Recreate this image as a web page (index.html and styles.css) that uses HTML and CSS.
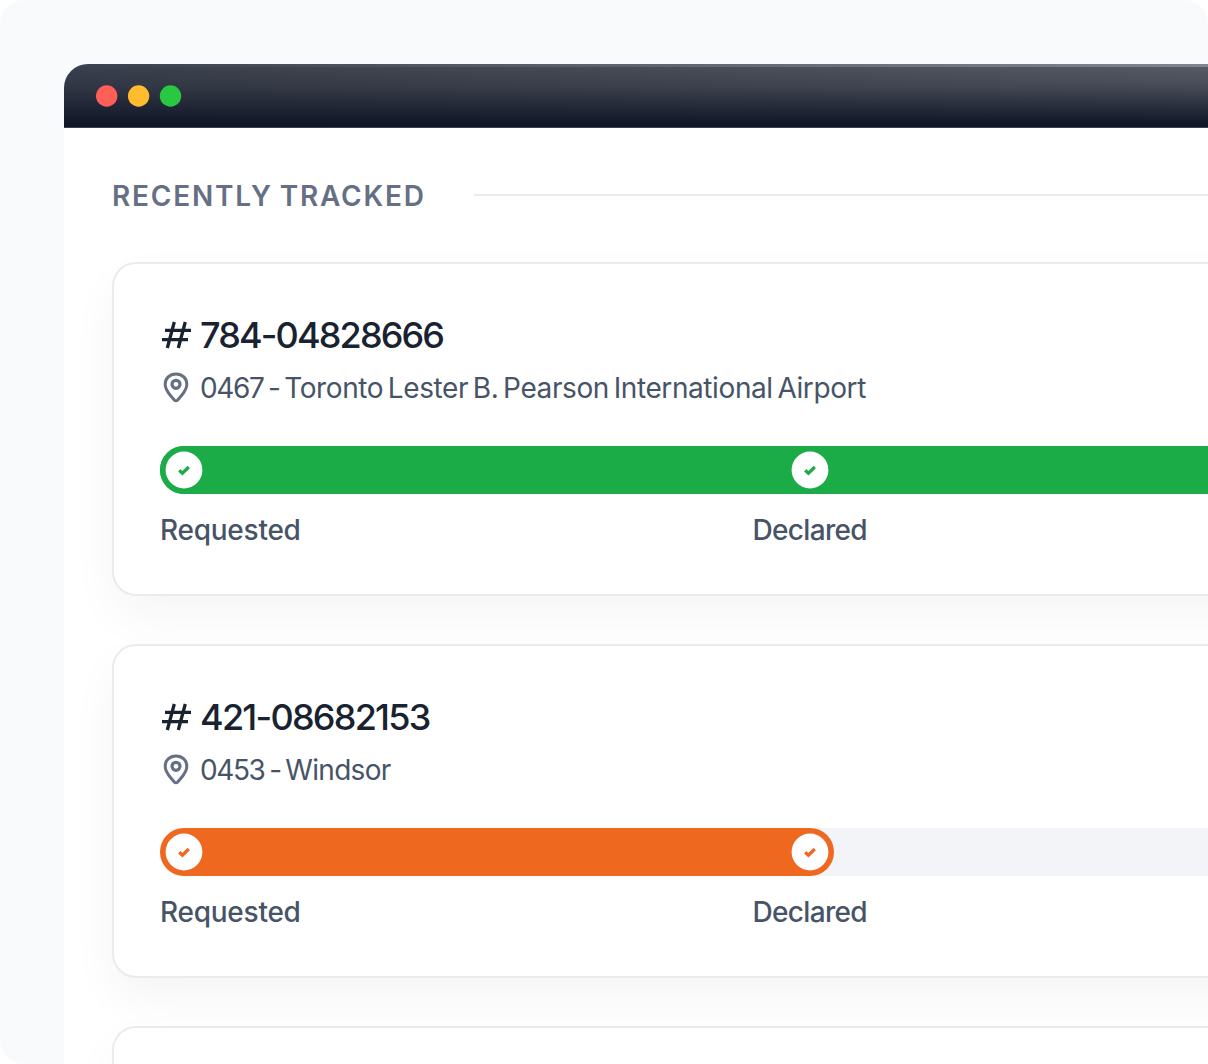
FILE: index.html
```html
<!DOCTYPE html>
<html lang="en">
<head>
    <meta charset="UTF-8">
    <meta name="viewport" content="width=device-width, initial-scale=1.0">
    <title>Recently Tracked</title>
    <link rel="stylesheet" href="styles.css">
</head>
<body>
    <!-- shared icons -->
    <svg class="sprite" width="0" height="0">
        <symbol id="hash" viewBox="0 0 32 32">
            <path d="M14.3 3 7.3 29M25.3 3 18.3 29M5 11.300h26M2 20.700h26" fill="none" stroke="currentColor" stroke-width="3.300"/>
        </symbol>
        <symbol id="pin" viewBox="0 0 32 32">
            <path d="M16 1.9C9.6 1.9 5.2 6.4 5.2 12.4c0 4.4 2.8 8.1 5.7 11.600l3.400 4c1 1.100 2.400 1.100 3.400 0l3.400-4c2.900-3.500 5.700-7.200 5.700-11.600C26.800 6.400 22.400 1.900 16 1.900Z" fill="none" stroke="currentColor" stroke-width="3"/>
            <circle cx="16" cy="12.300" r="4" fill="none" stroke="currentColor" stroke-width="3.200"/>
        </symbol>
        <symbol id="check" viewBox="0 0 48 48">
            <circle cx="24" cy="24" r="18.400" fill="#fff"/>
            <path d="M19.200 24.300 22.400 27.200 28.800 21" fill="none" stroke="currentColor" stroke-width="3.200"/>
        </symbol>
    </svg>

    <div class="page">
        <div class="window">
            <div class="titlebar">
                <svg class="dots" viewBox="0 0 86 22">
                    <circle cx="10.700" cy="11" r="10.700" fill="#ff5f57"/>
                    <circle cx="42.600" cy="11" r="10.700" fill="#febc2e"/>
                    <circle cx="74.500" cy="11" r="10.700" fill="#28c840"/>
                </svg>
            </div>
            <div class="content">
                <div class="heading">
                    <h2>RECENTLY TRACKED</h2>
                    <div class="rule"></div>
                </div>

                <div class="card done">
                    <div class="number"><svg class="icon"><use href="#hash"/></svg><span class="first">784-04828666</span></div>
                    <div class="location"><svg class="icon"><use href="#pin"/></svg><span class="airport"><span class="code">0467 - </span>Toronto Lester B. Pearson International Airport</span></div>
                    <div class="track">
                        <div class="progress">
                            <svg class="step"><use href="#check"/></svg>
                            <svg class="step"><use href="#check"/></svg>
                        </div>
                    </div>
                    <div class="labels">
                        <span class="requested">Requested</span>
                        <span class="declared">Declared</span>
                    </div>
                </div>

                <div class="card pending">
                    <div class="number"><svg class="icon"><use href="#hash"/></svg><span class="second">421-08682153</span></div>
                    <div class="location"><svg class="icon"><use href="#pin"/></svg><span class="city"><span class="code">0453 - </span>Windsor</span></div>
                    <div class="track">
                        <div class="progress">
                            <svg class="step"><use href="#check"/></svg>
                            <svg class="step"><use href="#check"/></svg>
                        </div>
                    </div>
                    <div class="labels">
                        <span class="requested">Requested</span>
                        <span class="declared">Declared</span>
                    </div>
                </div>

                <div class="card"></div>
            </div>
        </div>
    </div>
</body>
</html>
```
FILE: styles.css
```css
* {
    box-sizing: border-box;
}
body {
    margin: 0;
    font-family: Inter, "Liberation Sans", sans-serif;
    background-color: #fff;
    overflow: hidden;
}
.sprite {
    display: block;
}
.page {
    height: 1064px;
    padding: 64px 0 0 64px;
    background: #f9fafc;
    border-radius: 24px;
    overflow: hidden;
}
.window {
    width: 1144px;
    height: 1000px;
    background: #fff;
    border-radius: 24px 0 0 0;
    overflow: hidden;
}
.titlebar {
    display: flex;
    align-items: center;
    height: 64px;
    padding-left: 31.5px;
    background:
        linear-gradient(90deg, rgba(255, 255, 255, 0), rgba(255, 255, 255, 0.25)) 0 0 / 100% 3px no-repeat,
        linear-gradient(rgba(16, 22, 38, 0), rgba(16, 22, 38, 0.25) 35%, #101626 96%),
        linear-gradient(90deg, #3b414e, #40454f 20%, #595d67);
    border-bottom: 1px solid #3d4050;
}
.dots {
    width: 86px;
    height: 22px;
}
.content {
    padding: 44px 0 0 48px;
}
.heading {
    display: flex;
    align-items: center;
    height: 48px;
    margin-bottom: 42px;
}
h2 {
    width: 362px;
    margin: 0;
    font-size: 28px;
    line-height: 48px;
    font-weight: 600;
    letter-spacing: 1.8px;
    word-spacing: -2px;
    color: #667085;
    white-space: nowrap;
}
.rule {
    flex: 1;
    height: 2px;
    margin-bottom: 2px;
    background: #eaecf0;
}
.card {
    width: 1400px;
    height: 334px;
    margin-bottom: 48px;
    padding: 46px 46px 42px;
    background: #fff;
    border: 2px solid #eaeaf0;
    border-radius: 24px;
    box-shadow: 0 20px 50px -4px rgba(16, 16, 16, 0.05);
}
.card.done {
    box-shadow: 0 20px 50px -4px rgba(10, 40, 20, 0.05);
}
.icon {
    width: 32px;
    height: 32px;
    margin-right: 8px;
    flex: none;
}
.number {
    display: flex;
    align-items: center;
    height: 50px;
    font-size: 36px;
    font-weight: 500;
    color: #182230;
    white-space: nowrap;
}
.first {
    letter-spacing: -1.85px;
}
.second {
    letter-spacing: -1.75px;
}
.location {
    display: flex;
    align-items: center;
    height: 44px;
    margin: 6px 0 36px;
    font-size: 28px;
    color: #475467;
    white-space: nowrap;
}
.location .icon {
    color: #667085;
}
.airport {
    letter-spacing: -0.4px;
    word-spacing: -2.8px;
}
.city {
    letter-spacing: -0.7px;
}
.code {
    letter-spacing: -1.4px;
    word-spacing: -1.8px;
}
.track {
    height: 48px;
    background: #f2f4f7;
    border-radius: 24px;
}
.progress {
    display: flex;
    justify-content: space-between;
    width: 674px;
    height: 48px;
    border-radius: 24px;
    background: #ef6820;
    color: #ef6820;
}
.done .track,
.done .progress {
    background: #1cac47;
    color: #1cac47;
}
.step {
    width: 48px;
    height: 48px;
}
.labels {
    display: flex;
    justify-content: space-between;
    width: 707px;
    margin-top: 14px;
    font-size: 28px;
    line-height: 44px;
    font-weight: 500;
    color: #475467;
}
.requested {
    letter-spacing: -0.25px;
}
.declared {
    letter-spacing: -0.65px;
}
```
